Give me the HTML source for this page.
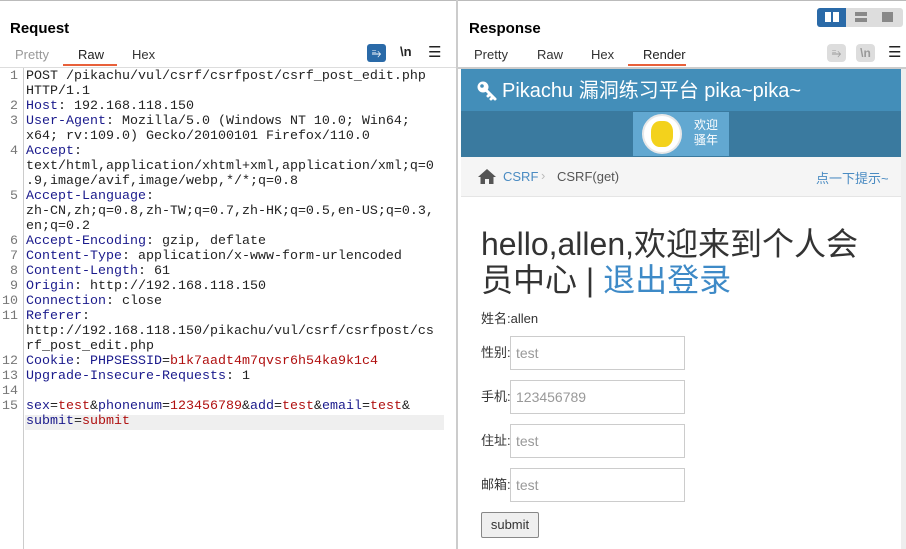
<!DOCTYPE html>
<html><head><meta charset="utf-8"><style>
*{margin:0;padding:0;box-sizing:border-box}
body{width:906px;height:549px;overflow:hidden;background:#fff;font-family:"Liberation Sans","Noto Sans CJK SC",sans-serif;position:relative}
.abs{position:absolute}
.h{font-weight:bold;font-size:15px;color:#000}
.tab{font-size:13px;color:#333}
.code{font-family:"Liberation Mono",monospace;font-size:13.33px;line-height:15px;color:#222;white-space:pre}
.k{color:#1a1a8c}.v{color:#b01010}
.ln{font-family:"Liberation Mono",monospace;font-size:13.33px;line-height:15px;color:#777;text-align:right;width:18px;white-space:pre}
.inp{position:absolute;left:510px;width:175px;height:34px;border:1px solid #ccc;font-size:14px;color:#999;padding:0 5px;line-height:32px;font-family:"Liberation Sans","Noto Sans CJK SC",sans-serif}
.lab{position:absolute;left:481px;font-size:13px;color:#333;line-height:16px}
</style></head><body>
<div class="abs" style="left:0;top:0;width:906px;height:1px;background:#bbb"></div>
<div class="abs" style="left:456px;top:0;width:2px;height:549px;background:#ccc"></div>
<div class="abs h" style="left:10px;top:20px">Request</div>
<div class="abs tab" style="left:15px;top:47px;color:#999">Pretty</div>
<div class="abs tab" style="left:78px;top:47px;color:#222">Raw</div>
<div class="abs" style="left:63px;top:64px;width:54px;height:2px;background:#e8603a"></div>
<div class="abs tab" style="left:132px;top:47px">Hex</div>
<div class="abs" style="left:367px;top:44px;width:19px;height:18px;background:#2a6aa8;border-radius:3px;color:#fff;font-size:12px;text-align:center;line-height:18px">⥱</div>
<div class="abs" style="left:400px;top:44px;font-size:13px;font-weight:bold;color:#222">\n</div>
<div class="abs" style="left:428px;top:43px;font-size:15px;color:#222">☰</div>
<div class="abs" style="left:0;top:67px;width:456px;height:1px;background:#ddd"></div>
<div class="abs" style="left:23px;top:68px;width:1px;height:481px;background:#ccc"></div>
<div class="abs" style="left:25px;top:415px;width:419px;height:15px;background:#efefef"></div>
<div class="abs ln" style="left:0;top:69px">1

2
3

4


5


6
7
8
9
10
11


12
13
14
15</div>
<div class="abs code" style="left:26px;top:69px">POST /pikachu/vul/csrf/csrfpost/csrf_post_edit.php
HTTP/1.1
<span class="k">Host</span>: 192.168.118.150
<span class="k">User-Agent</span>: Mozilla/5.0 (Windows NT 10.0; Win64;
x64; rv:109.0) Gecko/20100101 Firefox/110.0
<span class="k">Accept</span>:
text/html,application/xhtml+xml,application/xml;q=0
.9,image/avif,image/webp,*/*;q=0.8
<span class="k">Accept-Language</span>:
zh-CN,zh;q=0.8,zh-TW;q=0.7,zh-HK;q=0.5,en-US;q=0.3,
en;q=0.2
<span class="k">Accept-Encoding</span>: gzip, deflate
<span class="k">Content-Type</span>: application/x-www-form-urlencoded
<span class="k">Content-Length</span>: 61
<span class="k">Origin</span>: http://192.168.118.150
<span class="k">Connection</span>: close
<span class="k">Referer</span>:
http://192.168.118.150/pikachu/vul/csrf/csrfpost/cs
rf_post_edit.php
<span class="k">Cookie</span>: <span class="k">PHPSESSID</span>=<span class="v">b1k7aadt4m7qvsr6h54ka9k1c4</span>
<span class="k">Upgrade-Insecure-Requests</span>: 1

<span class="k">sex</span>=<span class="v">test</span>&amp;<span class="k">phonenum</span>=<span class="v">123456789</span>&amp;<span class="k">add</span>=<span class="v">test</span>&amp;<span class="k">email</span>=<span class="v">test</span>&amp;
<span class="k">submit</span>=<span class="v">submit</span></div>

<div class="abs h" style="left:469px;top:20px">Response</div>
<div class="abs" style="left:817px;top:8px;width:86px;height:19px;background:#ddd;border-radius:3px"></div>
<div class="abs" style="left:817px;top:8px;width:29px;height:19px;background:#2a6aa8;border-radius:3px 0 0 3px"></div>
<div class="abs" style="left:825px;top:12px;width:6px;height:10px;background:#fff"></div>
<div class="abs" style="left:833px;top:12px;width:6px;height:10px;background:#fff"></div>
<div class="abs" style="left:855px;top:12px;width:12px;height:4px;background:#888"></div>
<div class="abs" style="left:855px;top:18px;width:12px;height:4px;background:#888"></div>
<div class="abs" style="left:882px;top:12px;width:11px;height:10px;background:#888"></div>
<div class="abs tab" style="left:474px;top:47px">Pretty</div>
<div class="abs tab" style="left:537px;top:47px">Raw</div>
<div class="abs tab" style="left:591px;top:47px">Hex</div>
<div class="abs tab" style="left:643px;top:47px;color:#222">Render</div>
<div class="abs" style="left:628px;top:64px;width:58px;height:2px;background:#e8603a"></div>
<div class="abs" style="left:827px;top:44px;width:19px;height:18px;background:#ddd;border-radius:4px;color:#999;font-size:12px;text-align:center;line-height:18px">⥱</div>
<div class="abs" style="left:856px;top:44px;width:19px;height:18px;background:#ddd;border-radius:4px;color:#999;font-size:12px;text-align:center;line-height:18px;font-weight:bold">\n</div>
<div class="abs" style="left:888px;top:43px;font-size:15px;color:#222">☰</div>
<div class="abs" style="left:458px;top:67px;width:448px;height:2px;background:#ccc"></div>
<div class="abs" style="left:901px;top:69px;width:5px;height:480px;background:#eee"></div>

<div class="abs" style="left:461px;top:69px;width:440px;height:42px;background:#438eb9"></div>
<svg class="abs" style="left:476px;top:80px" width="22" height="22" viewBox="0 0 22 22"><circle cx="7" cy="7" r="5.5" fill="#fff"/><circle cx="6" cy="6" r="1.8" fill="#438eb9"/><path d="M10 10 L19 19 M14 14 L12 16 M17 17 L15 19" stroke="#fff" stroke-width="3" stroke-linecap="round"/></svg>
<div class="abs" style="left:502px;top:79px;font-size:20px;line-height:24px;color:#fff">Pikachu 漏洞练习平台 pika~pika~</div>
<div class="abs" style="left:461px;top:111px;width:440px;height:46px;background:#3a7a9f"></div>
<div class="abs" style="left:633px;top:112px;width:96px;height:44px;background:#62a8d1"></div>
<div class="abs" style="left:642px;top:114px;width:40px;height:40px;border-radius:50%;background:#fff;border:2px solid #e8e8e8"></div>
<div class="abs" style="left:651px;top:121px;width:22px;height:26px;border-radius:40%;background:#f3d21c"></div>
<div class="abs" style="left:694px;top:118px;font-size:12px;color:#fff;line-height:15px">欢迎<br>骚年</div>
<div class="abs" style="left:461px;top:157px;width:440px;height:40px;background:#f5f5f5;border-bottom:1px solid #e5e5e5"></div>
<svg class="abs" style="left:478px;top:169px" width="18" height="15" viewBox="0 0 18 15"><path d="M9 0 L18 8 L15.5 8 L15.5 15 L11 15 L11 10 L7 10 L7 15 L2.5 15 L2.5 8 L0 8 Z" fill="#555"/></svg>
<div class="abs" style="left:503px;top:169px;font-size:13px;color:#4a8bc2">CSRF</div>
<div class="abs" style="left:541px;top:168px;font-size:13px;color:#bbb">›</div>
<div class="abs" style="left:557px;top:169px;font-size:13px;color:#555">CSRF(get)</div>
<div class="abs" style="left:816px;top:168px;font-size:13px;color:#4a8bc2">点一下提示~</div>

<div class="abs" style="left:481px;top:226px;font-size:32px;line-height:36px;color:#333;width:392px">hello,allen,欢迎来到个人会员中心 | <span style="color:#3e8ac7">退出登录</span></div>
<div class="abs" style="left:481px;top:308px;font-size:13px;color:#333">姓名:allen</div>
<div class="lab" style="top:345px">性别:</div><div class="inp" style="top:336px">test</div>
<div class="lab" style="top:389px">手机:</div><div class="inp" style="top:380px">123456789</div>
<div class="lab" style="top:433px">住址:</div><div class="inp" style="top:424px">test</div>
<div class="lab" style="top:477px">邮箱:</div><div class="inp" style="top:468px">test</div>
<div class="abs" style="left:481px;top:512px;width:58px;height:26px;border:1px solid #888;border-radius:2px;background:#efefef;font-size:13px;color:#333;text-align:center;line-height:24px">submit</div>
</body></html>
